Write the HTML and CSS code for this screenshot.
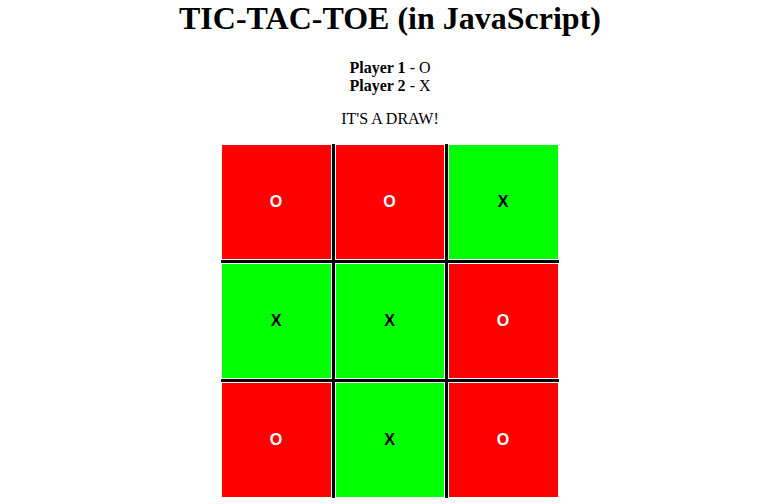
FILE: index.html
```html
<!DOCTYPE html>
<html>
<head>
<meta charset="utf-8">
<title>Tic-Tac-Toe</title>
<link rel="stylesheet" href="styles.css">
</head>
<body>
<h1 class="title">TIC-TAC-TOE (in JavaScript)</h1>
<div class="players">
  <div><b>Player 1</b> - O</div>
  <div><b>Player 2</b> - X</div>
</div>
<p class="status">IT'S A DRAW!</p>
<div class="board">
  <div class="cell o"><span class="mark">O</span></div>
  <div class="cell o"><span class="mark">O</span></div>
  <div class="cell x"><span class="mark">X</span></div>
  <div class="cell x"><span class="mark">X</span></div>
  <div class="cell x"><span class="mark">X</span></div>
  <div class="cell o"><span class="mark">O</span></div>
  <div class="cell o"><span class="mark">O</span></div>
  <div class="cell x"><span class="mark">X</span></div>
  <div class="cell o"><span class="mark">O</span></div>
</div>
</body>
</html>
```
FILE: styles.css
```css
html, body {
  margin: 0;
  padding: 0;
  background: #fff;
}
body {
  font-family: "Liberation Serif", "Times New Roman", serif;
  font-size: 16px;
  color: #000;
  text-align: center;
}
.title {
  font-size: 32px;
  font-weight: bold;
  margin: 0 0 22px 0;
  line-height: normal;
}
.players {
  line-height: 18px;
}
.status {
  margin: 15px 0 16px 0;
  line-height: 18px;
}
.board {
  display: grid;
  grid-template-columns: repeat(3, auto);
  justify-content: center;
  margin-right: 1px;
}
.cell {
  width: 108px;
  height: 114px;
  padding: 1px;
  background-clip: content-box;
  display: flex;
  align-items: center;
  justify-content: center;
  font-family: "Liberation Sans", Arial, sans-serif;
  font-size: 16px;
  font-weight: bold;
}
.cell:nth-child(3n+1),
.cell:nth-child(3n) {
  width: 109px;
}
.cell:nth-child(3n+1),
.cell:nth-child(3n+2) {
  border-right: 3px solid #000;
}
.cell:nth-child(-n+6) {
  border-bottom: 3px solid #000;
}
.cell.o {
  background-color: #ff0000;
  color: #fff;
}
.cell.x {
  background-color: #00ff00;
  color: #000;
}
```
